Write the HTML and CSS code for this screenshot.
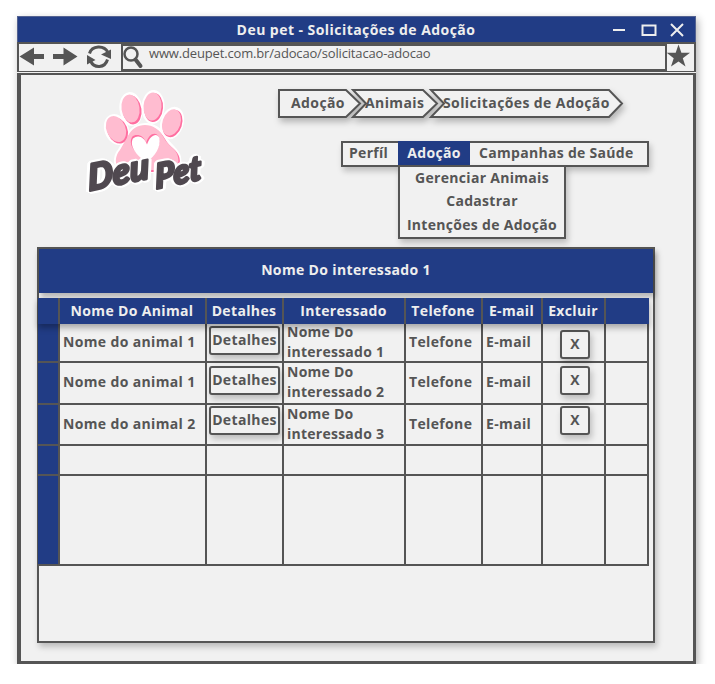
FILE: index.html
```html
<!DOCTYPE html>
<html lang="pt-BR">
<head>
<meta charset="utf-8">
<title>Deu pet - Solicitações de Adoção</title>
<link rel="stylesheet" href="styles.css">
</head>
<body>
<div class="window">
  <header class="titlebar">
    <h1>Deu pet - Solicitações de Adoção</h1>
    <svg class="controls" width="76" height="20" viewBox="0 0 76 20"><path d="M1 10h12M59 4l12 12M71 4L59 16"/><path d="M30.500 5.500h13v9.500h-13z"/></svg>
  </header>
  <div class="toolbar">
    <svg class="nav" width="103" height="27" viewBox="0 0 103 27">
      <path d="M1.500 12.500L16 3.500V10H26V15H16V21.500ZM59.500 12.500L45.500 3.500V10H35V15H45.500V21.500Z"/>
      <path class="stroke" d="M71.500 9.500C74 1.500 86 .8 90 8.500M89.500 15.500C87 24.500 76 24.500 72.500 17"/>
      <path d="M93 5.500V15L83 10.500ZM69 11V20.500L77.500 16Z"/>
    </svg>
    <div class="address">
      <svg width="24" height="25" viewBox="0 0 24 25"><circle cx="8" cy="8" r="6.500"/><path d="M12.500 13.500l5 6.500"/></svg>
      <span>www.deupet.com.br/adocao/solicitacao-adocao</span>
    </div>
    <svg class="star" width="27" height="27" viewBox="0 0 27 27"><path d="M11.500 .5l2.900 8.200H23l-7.200 5.500 2.700 8.300-7-5-7.500 5 2.700-8.300L-.3 8.700h9z"/></svg>
  </div>
  <main class="page">
    <div class="top">
      <svg class="logo" width="150" height="120" viewBox="70 80 150 120">
        <g class="halo"><ellipse cx="116.500" cy="128.500" rx="10" ry="14" transform="rotate(-22 116.500 128.500)"/><ellipse cx="131" cy="108" rx="9.500" ry="15" transform="rotate(-8 131 108)"/><ellipse cx="153" cy="106" rx="9.500" ry="15" transform="rotate(4 153 106)"/><ellipse cx="172" cy="122" rx="9.500" ry="14.500" transform="rotate(18 172 122)"/><path d="M128 135C135 120 156 120 165 137C169 145 177 148 179 156C182 170 170 170 155 170H124C114 168 114 156 120 149Z"/></g>
        <g class="shade"><ellipse cx="117.500" cy="129.500" rx="10" ry="13.500" transform="rotate(-22 117.500 129.500)"/><ellipse cx="132" cy="109" rx="9.500" ry="14.500" transform="rotate(-8 132 109)"/><ellipse cx="153.500" cy="106.500" rx="9.500" ry="14.500" transform="rotate(4 153.500 106.500)"/><ellipse cx="172.500" cy="122.500" rx="9.500" ry="14" transform="rotate(18 172.500 122.500)"/><path d="M128 136C135 121 156 121 165 138C169 146 178 149 179.500 157C182 171 170 171 155 171H125C115 169 115 157 120 150Z"/></g>
        <g class="pink"><ellipse cx="116" cy="128" rx="9.500" ry="13.500" transform="rotate(-22 116 128)"/><ellipse cx="130.500" cy="107.500" rx="9" ry="14" transform="rotate(-8 130.500 107.500)"/><ellipse cx="152.500" cy="105.500" rx="9" ry="14" transform="rotate(4 152.500 105.500)"/><ellipse cx="171.500" cy="121.500" rx="9" ry="13.500" transform="rotate(18 171.500 121.500)"/><path d="M128 135C135 120 156 120 164 137C168 145 177 148 178 156C181 169 169 169 155 169H124C114 168 114 156 120 149Z"/></g>
        <path class="heart-shade" d="M146 159C134 152 128 143 132 136C136 132 144 134 146 142C149 132 156 130 159 136C162 145 154 153 146 159Z"/>
        <path class="heart" d="M147 161C136 155 129 144 133 137.500C138 133 144.500 136 147 143.500C150 134 157 131 159.500 137C161 146 155 155 147 161Z"/>
        <g class="word"><text font-size="36" textLength="62" lengthAdjust="spacingAndGlyphs" transform="translate(89 190) rotate(-12) skewX(-8)">Deu</text><text font-size="34" textLength="47" lengthAdjust="spacingAndGlyphs" transform="translate(156 188) rotate(-12) skewX(-8)">Pet</text></g>
      </svg>
      <div class="navs">
        <nav class="crumbs">
          <svg width="347" height="31" viewBox="0 0 347 31"><path d="M2 2H69L83 15.500L69 29H2ZM76 2H146L160 15.500L146 29H76L89 15.500ZM154 2H332L345 15.500L332 29H154L167 15.500Z"/></svg>
          <span class="c1">Adoção</span><span class="c2">Animais</span><span class="c3">Solicitações de Adoção</span>
        </nav>
        <nav class="menu">
          <a class="m1">Perfíl</a>
          <div class="m2"><a>Adoção</a><div class="drop"><a>Gerenciar Animais</a><a>Cadastrar</a><a>Intenções de Adoção</a></div></div>
          <a class="m3">Campanhas de Saúde</a>
        </nav>
      </div>
    </div>
    <section class="panel">
      <h2>Nome Do interessado 1</h2>
      <table>
        <colgroup><col class="w22"><col class="w147"><col class="w77"><col class="w122"><col class="w77"><col class="w60"><col class="w63"><col class="w43"></colgroup>
        <thead><tr><th></th><th>Nome Do Animal</th><th>Detalhes</th><th>Interessado</th><th>Telefone</th><th>E-mail</th><th>Excluir</th><th></th></tr></thead>
        <tbody>
          <tr class="r1"><td></td><td>Nome do animal 1</td><td><button>Detalhes</button></td><td><div>Nome Do<br>interessado 1</div></td><td>Telefone</td><td>E-mail</td><td><button class="x">X</button></td><td></td></tr>
          <tr class="r2"><td></td><td>Nome do animal 1</td><td><button>Detalhes</button></td><td><div>Nome Do<br>interessado 2</div></td><td>Telefone</td><td>E-mail</td><td><button class="x">X</button></td><td></td></tr>
          <tr class="r3"><td></td><td>Nome do animal 2</td><td><button>Detalhes</button></td><td><div>Nome Do<br>interessado 3</div></td><td>Telefone</td><td>E-mail</td><td><button class="x">X</button></td><td></td></tr>
          <tr class="r4"><td></td><td></td><td></td><td></td><td></td><td></td><td></td><td></td></tr>
          <tr class="r5"><td></td><td></td><td></td><td></td><td></td><td></td><td></td><td></td></tr>
        </tbody>
      </table>
    </section>
  </main>
</div>
</body>
</html>
```

FILE: styles.css
```css
:root { --ink: #555; --blue: #213c85; --bg: #f1f1f1; --shadow: 2px 4px 6px rgba(0,0,0,.22); }
* { box-sizing: border-box; }
body { margin: 0; padding: 16px 0 0 17px; background: #fff; color: var(--ink); font: 700 14px/20px "Open Sans", "Noto Sans", sans-serif; letter-spacing: .35px; }
h1, h2 { margin: 0; font: inherit; }
.window { width: 679px; height: 648px; background: var(--bg); box-shadow: 2px 3px 8px rgba(0,0,0,.3); display: flex; flex-direction: column; }
.titlebar { height: 26px; flex: none; background: var(--blue); color: #eee; border: 1px solid #536291; border-bottom: 0; display: grid; grid-template-columns: 1fr 76px; align-items: center; padding-right: 7px; }
.titlebar h1 { padding-left: 82px; text-align: center; line-height: 26px; letter-spacing: .45px; }
.controls path { fill: none; stroke: #eee; stroke-width: 2; }
.toolbar { flex: none; height: 30px; border: 2px solid var(--ink); border-bottom-width: 1px; display: flex; }
.nav path, .star path { fill: var(--ink); }
.nav .stroke { fill: none; stroke: var(--ink); stroke-width: 3; }
.nav { flex: none; margin-left: -1px; }
.address { width: 546px; height: 27px; border: 2px solid var(--ink); display: flex; font-size: 13px; font-weight: 400; letter-spacing: -.16px; line-height: 14px; }
.address svg { flex: none; width: 26px; margin-left: -1px; margin-right: 1px; }
.address svg * { fill: none; stroke: var(--ink); stroke-width: 2.500; }
.address svg path { stroke-width: 4; stroke-linecap: round; }
.star { flex: none; overflow: visible; }
.page { flex: 1; border: solid var(--ink); border-width: 2px 3px 3px 4px; margin-top: 1px; padding: 0 37px 0 16px; }
.top { height: 172px; display: flex; }
.logo { margin: 6px 0 0 33px; flex: none; }
.halo * { fill: #fff; stroke: #fff; stroke-width: 4; }
.shade { fill: #ff6ea0; }
.pink { fill: #ffbcd0; }
.heart { fill: #fff; }
.heart-shade { fill: #ff6ea0; }
.word { font-family: Lato, sans-serif; font-weight: 900; font-style: italic; fill: #504950; stroke: #504950; stroke-width: 2.500; stroke-linejoin: round; letter-spacing: 0; filter: drop-shadow(2px 1px 0 #fff) drop-shadow(-2px -1px 0 #fff) drop-shadow(-1px 1.500px 0 #fff) drop-shadow(1px -1px 0 #fff); }
.navs { margin-left: 57px; padding-top: 13px; }
.crumbs { display: grid; width: 347px; height: 31px; grid-template-columns: 14px 74px 78px 1fr; align-items: center; line-height: 31px; }
.crumbs svg { grid-area: 1 / 1 / 2 / 5; overflow: visible; filter: drop-shadow(2px 4px 3px rgba(0,0,0,.25)); }
.crumbs path { fill: var(--bg); stroke: var(--ink); stroke-width: 2; }
.crumbs span { z-index: 1; grid-row: 1; white-space: nowrap; margin-top: -3px; letter-spacing: .4px; }
.c1 { grid-column: 2; }
.c2 { grid-column: 3; }
.c3 { grid-column: 4; }
.menu { display: flex; width: 308px; height: 26px; margin: 22px 0 0 64px; border: 2px solid var(--ink); box-shadow: var(--shadow); line-height: 20px; letter-spacing: .3px; }
.m1 { width: 55px; padding-left: 6px; }
.m2 { position: relative; width: 72px; height: 24px; margin-top: -2px; background: var(--blue); color: #eee; text-align: center; line-height: 24px; }
.m3 { padding-left: 9px; }
.drop { position: absolute; top: 24px; left: 0; width: 168px; height: 74px; border: 2px solid var(--ink); background: var(--bg); color: var(--ink); box-shadow: var(--shadow); line-height: 23px; display: flex; flex-direction: column; }
.drop a { height: 24px; margin-top: -1px; margin-bottom: 1px; }
.panel { width: 618px; height: 396px; border: 2px solid var(--ink); box-shadow: var(--shadow); }
.panel h2 { height: 44px; background: var(--blue); color: #eee; line-height: 42px; text-align: center; box-shadow: 2px 4px 5px rgba(0,0,0,.25); }
table { table-layout: fixed; width: 611px; margin: 5px 0 0 -1px; border-spacing: 0; }
.w22 { width: 22px; }
.w147 { width: 147px; }
.w77 { width: 77px; }
.w122 { width: 122px; }
.w60 { width: 60px; }
.w63 { width: 63px; }
.w43 { width: 43px; }
th, td { padding: 0 0 2px 3px; border-right: 2px solid var(--ink); white-space: nowrap; text-align: left; }
thead { position: relative; box-shadow: 0 4px 6px rgba(0,0,0,.3); }
th { height: 26px; padding: 0 1px 2px 0; background: var(--blue); color: #eee; text-align: center; line-height: 23px; }
th:last-child { border-color: var(--blue); }
td { border-bottom: 2px solid var(--ink); }
td:first-child { background: var(--blue); }
td:nth-child(3) { padding: 0 0 0 2px; vertical-align: top; }
td:nth-child(4) { padding-bottom: 0; vertical-align: top; letter-spacing: .25px; }
td:nth-child(7) { padding: 0 0 0 17px; vertical-align: top; }
.r1 { height: 39px; }
.r2 { height: 42px; }
.r3 { height: 41px; }
.r4 { height: 30px; }
.r5 { height: 90px; }
td div { height: 36px; margin-top: -2px; }
.r2 div, .r3 div { margin-top: -1px; }
button { display: block; width: 71px; height: 29px; padding: 0 0 2px; border: 2px solid var(--ink); border-radius: 3px; background: var(--bg); color: var(--ink); font: inherit; letter-spacing: inherit; line-height: 22px; box-shadow: var(--shadow); }
button.x { width: 30px; }
.r1 button { margin-top: 2px; }
.r1 .x { margin-top: 6px; }
.r2 button { margin-top: 3px; }
.r3 button { margin-top: 1px; }
```
